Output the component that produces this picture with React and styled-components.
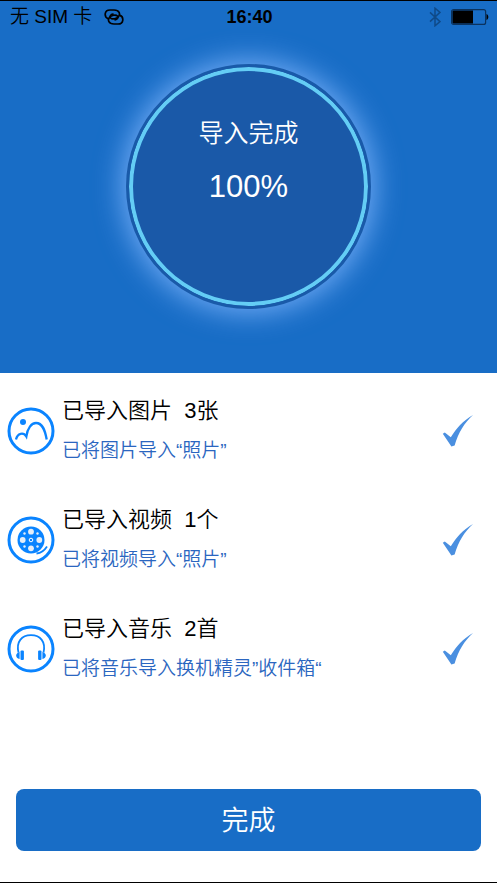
import React from 'react';
import styled, { createGlobalStyle, css } from 'styled-components';

const items = [
  { id: 'photos', icon: PhotoIcon, title: '已导入图片  3张', note: '已将图片导入“照片”' },
  { id: 'videos', icon: VideoIcon, title: '已导入视频  1个', note: '已将视频导入“照片”' },
  { id: 'music', icon: MusicIcon, title: '已导入音乐  2首', note: '已将音乐导入换机精灵”收件箱“' },
];

function App() {
  return (
    <>
      <GlobalStyle />
      <Screen>
        <Hero>
          <StatusBar>
            <Carrier>
              <span>无 SIM 卡</span>
              <LinkIcon />
            </Carrier>
            <Clock>16:40</Clock>
            <Indicators>
              <BluetoothIcon />
              <BatteryIcon />
            </Indicators>
          </StatusBar>
          <Dial>
            <DialLabel>导入完成</DialLabel>
            <Percent>100%</Percent>
          </Dial>
        </Hero>
        <List>
          {items.map(({ id, icon: Icon, title, note }) => (
            <Item key={id}>
              <Icon />
              <Texts>
                <Title>{title}</Title>
                <Note>{note}</Note>
              </Texts>
              <CheckIcon />
            </Item>
          ))}
        </List>
        <Footer>
          <DoneButton type="button">完成</DoneButton>
        </Footer>
      </Screen>
    </>
  );
}

function LinkIcon() {
  return (
    <svg width="20" height="16" viewBox="0 0 20 16" fill="none" stroke="#000" strokeWidth="1.7" strokeLinecap="round" aria-hidden="true">
      <path d="M4 9.600C0 8 0 1 6 1h4c5.600 0 6.400 4 4.600 6.400C12.800 10 8 10.600 6.600 9 5.400 7.400 6.600 5.400 9 5.200" />
      <path d="M16 6.400c4 1.600 4 8.600-2 8.600h-4c-5.600 0-6.400-4-4.600-6.400C7.200 6 12 5.400 13.400 7c1.200 1.600 0 3.600-2.400 3.800" />
    </svg>
  );
}

function BluetoothIcon() {
  return (
    <svg width="12" height="20" viewBox="0 0 12 20" fill="none" stroke="#0f4a88" strokeWidth="1.5" aria-hidden="true">
      <path d="M1 5.400l10 9.200-5 4.200V1.200l5 4.200L1 14.600" />
    </svg>
  );
}

function BatteryIcon() {
  return (
    <svg width="38" height="16" viewBox="0 0 38 16" aria-hidden="true">
      <rect x=".6" y=".6" width="34" height="14.8" rx="2" fill="none" stroke="#0b335f" strokeWidth="1.2" />
      <path d="M2.500 1.500H22v13H2.500a1 1 0 0 1-1-1v-11a1 1 0 0 1 1-1z" />
      <path d="M35.500 5c2.400.8 2.400 5.200 0 6z" />
    </svg>
  );
}

function RoundIcon({ children }) {
  return (
    <svg width="48" height="48" viewBox="0 0 48 48" fill="none" stroke="#0a84ff" aria-hidden="true">
      <circle cx="24" cy="24" r="22" strokeWidth="3" />
      {children}
    </svg>
  );
}

function PhotoIcon() {
  return (
    <RoundIcon>
      <circle cx="16" cy="15" r="3" fill="#0a84ff" stroke="none" />
      <path d="M9 32.500c1.500-6.500 7.500-7.500 10.300-3C20.500 21 24.500 16 29 16c6.500 0 9 7 10.700 16.500" strokeWidth="2.3" />
    </RoundIcon>
  );
}

function VideoIcon() {
  return (
    <RoundIcon>
      <circle cx="24" cy="24" r="13.5" fill="#0a84ff" stroke="none" />
      <g fill="#e6eef8" stroke="none">
        <circle cx="24" cy="15.7" r="2.9" />
        <circle cx="24" cy="32.3" r="2.9" />
        <circle cx="15.7" cy="24" r="2.9" />
        <circle cx="32.3" cy="24" r="2.9" />
        <circle cx="17.5" cy="17.5" r="1.2" />
        <circle cx="30.5" cy="17.5" r="1.2" />
        <circle cx="17.5" cy="30.5" r="1.2" />
        <circle cx="30.5" cy="30.5" r="1.2" />
      </g>
      <circle cx="24" cy="24" r="1.8" stroke="#fff" strokeWidth="1" />
      <path d="M29.500 37.500c4.500-.5 8-3 10.500-7" strokeWidth="1.8" />
    </RoundIcon>
  );
}

function MusicIcon() {
  return (
    <RoundIcon>
      <path d="M11.500 27.500C9 17 14.500 10.200 24 10.200S39 17 36.500 27.500" strokeWidth="1.8" />
      <g fill="#0a84ff" stroke="none">
        <rect x="13.5" y="25.5" width="3.4" height="9.5" rx="1" />
        <rect x="31.1" y="25.5" width="3.4" height="9.5" rx="1" />
        <path d="M12.600 27v7c-4.600-1-4.600-6 0-7zM35.400 27v7c4.600-1 4.600-6 0-7z" />
      </g>
    </RoundIcon>
  );
}

function CheckIcon() {
  return (
    <svg width="32" height="34" viewBox="0 0 32 34" fill="#4a8fe0" aria-hidden="true">
      <path d="M.8 19.800l2-1.200 6 4.700C14 15 21 6.500 31 1 22.500 9 16.500 18 12.600 31.600l-3.200.8z" />
    </svg>
  );
}

const GlobalStyle = createGlobalStyle`
  * {
    box-sizing: border-box;
  }

  body {
    margin: 0;
    background-color: #ffffff;
    font-family: 'Liberation Sans', 'Noto Sans CJK SC', sans-serif;
    font-weight: 350;
  }
`;

const Screen = styled.main`
  display: flex;
  flex-direction: column;
  min-height: 100vh;
  border-top: 1px solid #000000;
  border-bottom: 1px solid #000000;
`;

const Hero = styled.header`
  padding-bottom: 64px;
  background-color: #186dc6;
`;

const StatusBar = styled.div`
  display: grid;
  grid-template-columns: 1fr auto 1fr;
  align-items: center;
  height: 32px;
  padding: 0 8px 0 10px;
  color: #000000;
  font-size: 18px;
`;

const side = css`
  display: flex;
  align-items: center;
`;

const Carrier = styled.div`
  ${side}
  gap: 12px;
  font-size: 19px;
  line-height: 24px;
`;

const Clock = styled.time`
  font-weight: bold;
`;

const Indicators = styled.div`
  ${side}
  justify-content: flex-end;
  gap: 10px;
`;

const Dial = styled.section`
  display: flex;
  flex-direction: column;
  align-items: center;
  width: 245px;
  height: 245px;
  margin: 31px auto 0;
  padding-top: 46px;
  border: 3px solid #195aa9;
  border-radius: 50%;
  background-color: #1a59a8;
  box-shadow: inset 0 0 0 4px #64cdf5, 0 0 28px 4px #70aaf5;
  color: #ffffff;
`;

const DialLabel = styled.h1`
  margin: 0;
  font-size: 25px;
  font-weight: 350;
  line-height: 40px;
`;

const Percent = styled.p`
  margin: 12px 0 0;
  font-size: 31px;
  line-height: 44px;
`;

const List = styled.ul`
  display: flex;
  flex-direction: column;
  gap: 29px;
  margin: 0;
  padding: 18px 23px 0 7px;
  list-style: none;
`;

const Item = styled.li`
  display: flex;
  align-items: center;
  gap: 7px;

  svg {
    flex-shrink: 0;
  }
`;

const Texts = styled.div`
  flex: 1;
  min-width: 0;
`;

const Title = styled.h2`
  margin: 0;
  color: #000000;
  font-size: 22px;
  font-weight: 350;
  line-height: 40px;
  white-space: pre-wrap;
`;

const Note = styled.p`
  margin: 0;
  color: #2b66c0;
  font-size: 19px;
  line-height: 40px;
`;

const Footer = styled.footer`
  margin-top: auto;
  padding: 16px 16px 31px;
`;

const DoneButton = styled.button`
  display: block;
  width: 100%;
  height: 62px;
  padding: 0 0 4px;
  border: 0;
  border-radius: 8px;
  background-color: #186dc6;
  color: #ffffff;
  font-family: inherit;
  font-size: 27px;
  font-weight: 350;
`;

export default App;
